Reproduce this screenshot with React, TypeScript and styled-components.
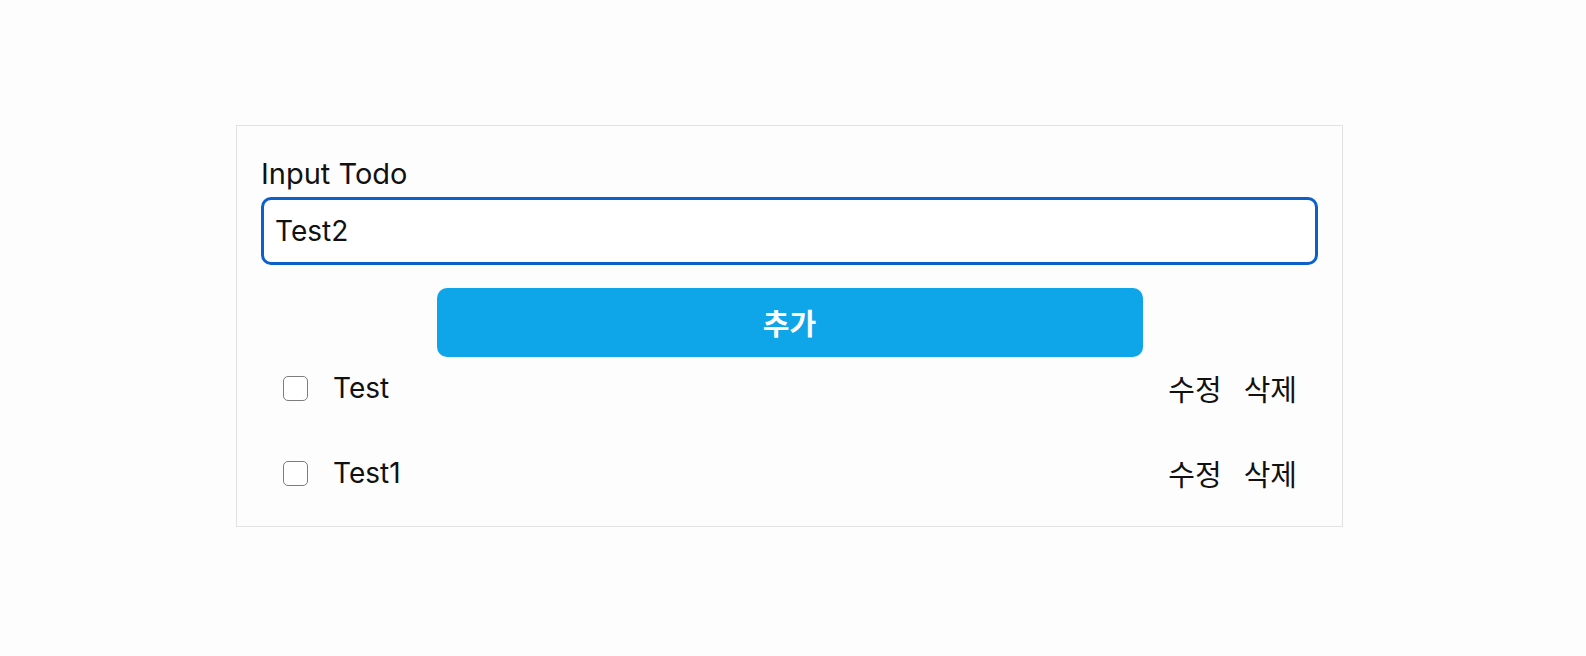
import React, { useState } from "react";
import styled, { createGlobalStyle } from "styled-components";

const GlobalStyle = createGlobalStyle`
  html, body {
    margin: 0;
    padding: 0;
    background: #fdfdfd;
  }
  body {
    font-family: Inter, "Noto Sans CJK KR", sans-serif;
    color: #111;
  }
  * { box-sizing: border-box; }
`;

const Page = styled.div`
  padding-top: 125px;
  padding-left: 236px;
  width: 1586px;
`;

const Card = styled.div`
  width: 1107px;
  height: 402px;
  border: 1px solid #e2e2e2;
  background: #fdfdfd;
  padding: 28px 24px 24px 24px;
  display: flex;
  flex-direction: column;
`;

const Label = styled.label`
  font-size: 29px;
  line-height: 38px;
  height: 38px;
  padding-top: 1px;
  color: #111;
`;

const TodoInput = styled.input`
  margin-top: 5px;
  height: 68px;
  width: 100%;
  border: 3px solid #0b60c9;
  border-radius: 10px;
  padding: 0 11px;
  font-family: Inter, "Noto Sans CJK KR", sans-serif;
  font-size: 28px;
  color: #111;
  background: #fff;
  outline: none;
  caret-color: #111;
`;

const AddButton = styled.button`
  margin: 23px auto 0;
  width: 706px;
  height: 69px;
  border: none;
  border-radius: 10px;
  background: #0ea5e9;
  color: #fff;
  font-family: "Noto Sans CJK KR", sans-serif;
  font-weight: 700;
  font-size: 29px;
  line-height: 1;
  cursor: pointer;
`;

const List = styled.ul`
  list-style: none;
  margin: 2px 0 0;
  padding: 0;
  display: flex;
  flex-direction: column;
  gap: 27px;
`;

const Row = styled.li`
  height: 58px;
  display: flex;
  align-items: center;
  padding: 0 21px 0 22px;
`;

const Check = styled.input.attrs({ type: "checkbox" })`
  appearance: none;
  margin: 0;
  width: 25px;
  height: 25px;
  border: 1.5px solid #7d7d7d;
  border-radius: 5px;
  background: #fff;
  flex: none;
`;

const Title = styled.span`
  margin-left: 25px;
  font-size: 28px;
  line-height: 38px;
  flex: 1;
`;

const Actions = styled.div`
  display: flex;
  gap: 22px;
`;

const TextButton = styled.button`
  background: none;
  border: none;
  padding: 0;
  font-family: "Noto Sans CJK KR", sans-serif;
  font-size: 29px;
  line-height: 38px;
  color: #111;
  cursor: pointer;
`;

const todos = [
  { id: 1, title: "Test" },
  { id: 2, title: "Test1" },
];

export default function App() {
  const [value, setValue] = useState("Test2");
  return (
    <>
      <GlobalStyle />
      <Page>
        <Card>
          <Label htmlFor="todo">Input Todo</Label>
          <TodoInput
            id="todo"
            autoFocus
            value={value}
            onFocus={(e) => {
              const len = e.target.value.length;
              e.target.setSelectionRange(len, len);
            }}
            onChange={(e) => setValue(e.target.value)}
          />
          <AddButton>추가</AddButton>
          <List>
            {todos.map((t) => (
              <Row key={t.id}>
                <Check />
                <Title>{t.title}</Title>
                <Actions>
                  <TextButton>수정</TextButton>
                  <TextButton>삭제</TextButton>
                </Actions>
              </Row>
            ))}
          </List>
        </Card>
      </Page>
    </>
  );
}
